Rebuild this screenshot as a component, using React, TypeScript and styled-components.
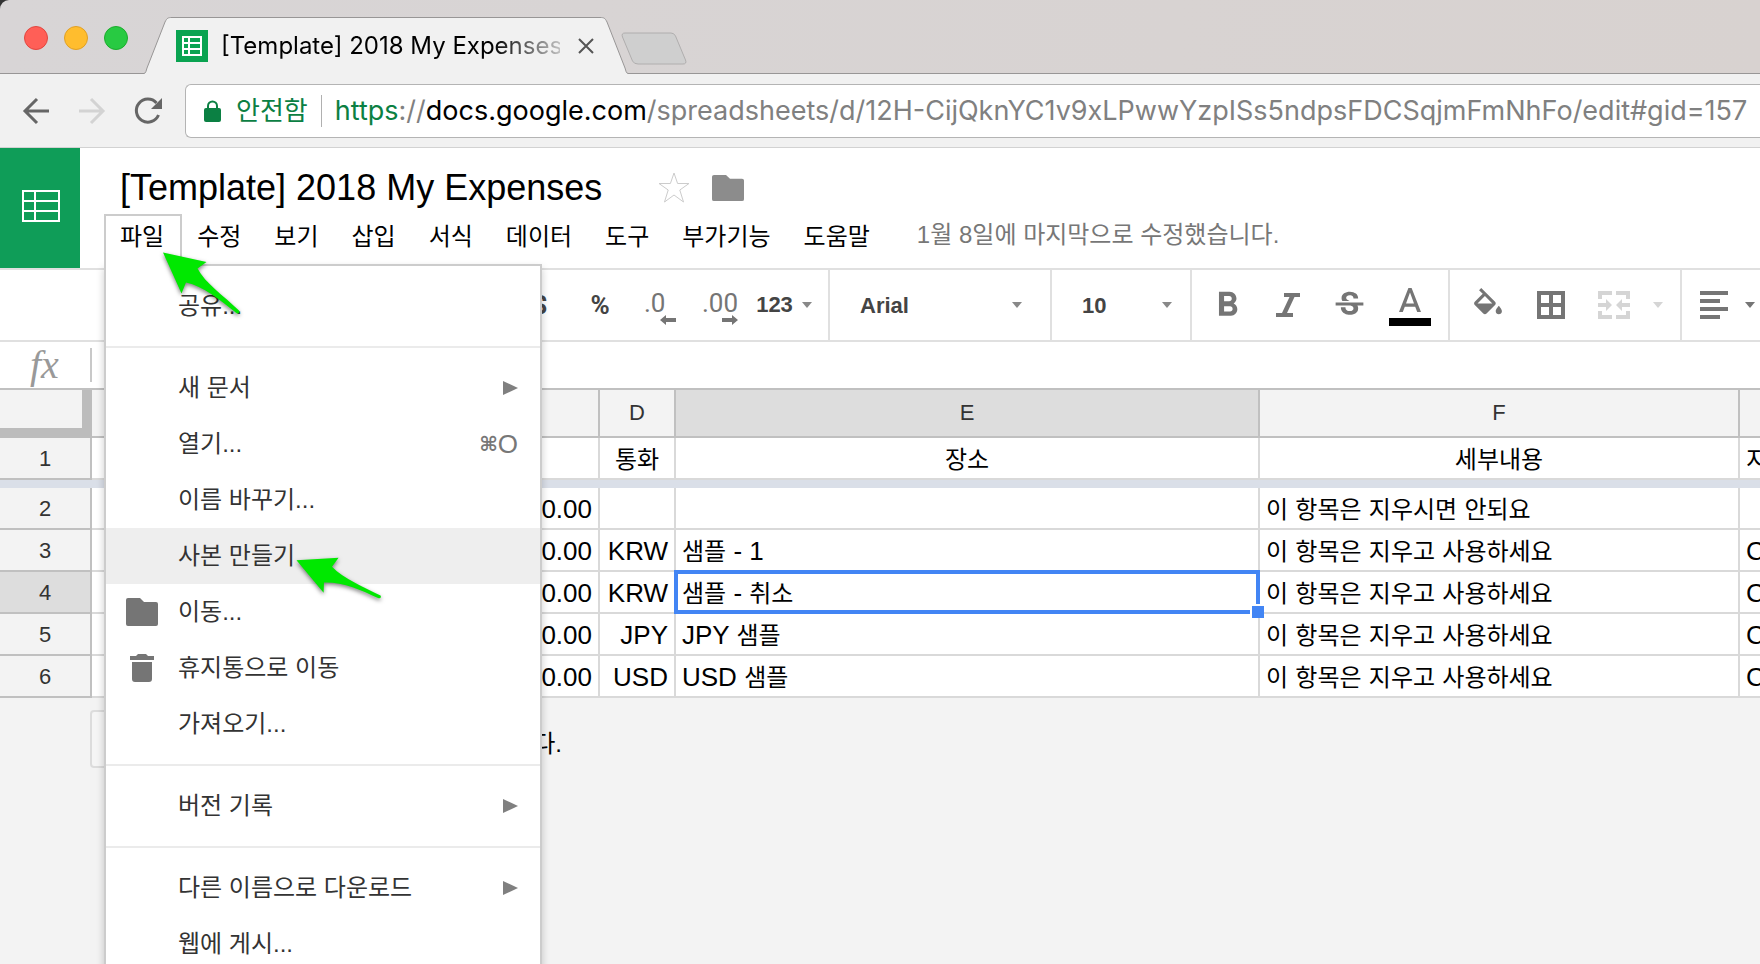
import React from "react";
import styled, { createGlobalStyle, css } from "styled-components";
import { MdFormatBold, MdStrikethroughS } from "react-icons/md";

const GlobalStyle = createGlobalStyle`
  *, *::before, *::after { box-sizing: border-box; }
  body {
    margin: 0;
    background: #f3f3f3;
    color: #000;
    font-family: "Liberation Sans", "Noto Sans CJK KR", sans-serif;
    font-size: 24px;
  }
  button, input, select { font: inherit; color: inherit; }
  svg { display: block; }
`;

const UI_FONT = `Inter, "Noto Sans CJK KR", sans-serif`;

const plainControl = css`
  margin: 0;
  padding: 0;
  border: 0;
  background: transparent;
  outline: 0;
`;

const Window = styled.div`
  position: relative;
  height: 100vh;
  overflow: hidden;
  display: flex;
  flex-direction: column;
  > * { flex: none; }
`;

/* ---------- Browser chrome ---------- */

const Desktop = styled.div`
  background: #333;
`;

const TabStrip = styled.div`
  display: flex;
  align-items: flex-end;
  height: 74px;
  padding-left: 24px;
  border-bottom: 1px solid #989696;
  border-top-left-radius: 9px;
  background: linear-gradient(90deg, #d8d5d6, #d8d2d0);
`;

const Lights = styled.div`
  display: flex;
  gap: 16px;
  width: 120px;
  padding-bottom: 23px;
`;

const Light = styled.button<{ $color: string; $edge: string }>`
  ${plainControl}
  width: 24px;
  height: 24px;
  border-radius: 50%;
  border: 1px solid ${(p) => p.$edge};
  background: ${(p) => p.$color};
`;

const Tab = styled.div`
  position: relative;
  display: flex;
  align-items: center;
  width: 484px;
  height: 57px;
  margin-bottom: -1px;
  padding: 0 34px 0 32px;
`;

const TabShape = styled.svg`
  position: absolute;
  inset: 0;
  width: 100%;
  height: 100%;
`;

const Favicon = styled.svg`
  position: relative;
  flex: none;
`;

const TabTitle = styled.span`
  position: relative;
  flex: 1;
  margin: 0 18px 0 13px;
  overflow: hidden;
  white-space: nowrap;
  font: 24px/32px ${UI_FONT};
  mask-image: linear-gradient(90deg, #000 80%, rgba(0, 0, 0, 0.2));
`;

const BareButton = styled.button`
  ${plainControl}
  position: relative;
  flex: none;
  display: flex;
`;

const NewTab = styled(BareButton)`
  margin: 0 0 8px -7px;
`;

const NavBar = styled.div`
  display: flex;
  align-items: center;
  height: 74px;
  padding-left: 22px;
  border-bottom: 1px solid #d2d2d2;
  background: #f1f1f1;
`;

const NavButtons = styled.div`
  display: flex;
  gap: 28px;
  width: 163px;
`;

const Omnibox = styled.div`
  flex: 1;
  display: flex;
  align-items: center;
  height: 54px;
  min-width: 0;
  padding-left: 18px;
  border: 1px solid #b4b4b4;
  border-right: 0;
  border-radius: 6px 0 0 6px;
  background: #fff;
  font: 27px/40px ${UI_FONT};
`;

const Secure = styled.button`
  ${plainControl}
  display: flex;
  align-items: center;
  gap: 15px;
  padding-right: 13px;
  border-right: 1px solid #b0b0b0;
  color: #0b8043;
  font-size: 26px;
  line-height: 32px;
`;

const Url = styled.div`
  flex: 1;
  padding-left: 13px;
  overflow: hidden;
  white-space: nowrap;
  color: #808080;
  outline: 0;
`;

const UrlPart = styled.span<{ $color: string }>`
  color: ${(p) => p.$color};
`;

/* ---------- Document header ---------- */

const DocHeader = styled.header`
  display: flex;
  border-bottom: 2px solid #e0e0e0;
  background: #fff;
`;

const HomeLink = styled.a`
  display: flex;
  align-items: center;
  justify-content: center;
  width: 80px;
  height: 120px;
  padding: 0 0 4px 2px;
  background: #0f9d58;
`;

const DocMain = styled.div`
  flex: 1;
  padding: 20px 0 0 24px;
`;

const TitleRow = styled.div`
  display: flex;
  align-items: center;
  height: 40px;
  margin-bottom: 6px;
  padding-left: 16px;
`;

const TitleInput = styled.input`
  ${plainControl}
  width: 522px;
  height: 40px;
  margin-right: 16px;
  font-size: 36px;
`;

const StarButton = styled(BareButton)`
  margin-right: 22px;
`;

const MenuRow = styled.nav`
  display: flex;
  align-items: flex-start;
  height: 54px;
`;

const MenuSlot = styled.div`
  position: relative;
  margin-right: -1px;
`;

const MenuButton = styled.button<{ $open?: boolean }>`
  ${plainControl}
  display: block;
  height: 46px;
  padding: 0 16px 2px 14px;
  border: 2px solid transparent;
  border-bottom: 0;
  line-height: 42px;
  white-space: nowrap;
  ${(p) =>
    p.$open &&
    css`
      position: relative;
      z-index: 3;
      height: 52px;
      padding-bottom: 8px;
      border-color: #ccc;
      background: #fff;
    `}
`;

const SaveStatus = styled.span`
  margin-left: 30px;
  line-height: 42px;
  color: #777;
`;

const Menu = styled.div`
  position: absolute;
  z-index: 2;
  top: 50px;
  left: 0;
  width: 438px;
  padding: 12px 0;
  border: 2px solid #ccc;
  background: #fff;
  box-shadow: 0 4px 8px rgba(0, 0, 0, 0.2);
`;

const MenuItem = styled.button<{ $active?: boolean }>`
  ${plainControl}
  display: flex;
  align-items: center;
  width: 100%;
  height: 56px;
  padding: 0 22px 0 20px;
  background: ${(p) => (p.$active ? "#eee" : "transparent")};
  color: #333;
  text-align: left;
`;

const MenuIcon = styled.span`
  width: 52px;
`;

const MenuLabel = styled.span`
  flex: 1;
  line-height: 32px;
`;

const Shortcut = styled.span`
  display: flex;
  align-items: center;
  color: #777;
  font-size: 26px;
  line-height: 32px;
`;

const CommandKey = styled.span`
  font: bold 20px/28px "DejaVu Sans", sans-serif;
`;

const Divider = styled.hr`
  height: 2px;
  margin: 12px 0;
  border: 0;
  background: #ebebeb;
`;

/* ---------- Toolbar ---------- */

const Toolbar = styled.div`
  display: flex;
  height: 72px;
  border-bottom: 2px solid #e0e0e0;
  background: #fff;
`;

const Group = styled.div<{ $width: number; $start?: number; $gap?: number; $end?: number }>`
  flex: none;
  display: flex;
  align-items: center;
  justify-content: ${(p) => (p.$end ? "flex-end" : "flex-start")};
  gap: ${(p) => p.$gap ?? 0}px;
  width: ${(p) => p.$width}px;
  padding: 0 ${(p) => p.$end ?? 0}px 0 ${(p) => p.$start ?? 0}px;
  border-right: 2px solid #e0e0e0;
`;

const ToolButton = styled.button<{ $width?: number; $faded?: boolean }>`
  ${plainControl}
  flex: none;
  display: flex;
  align-items: center;
  justify-content: center;
  gap: 9px;
  width: ${(p) => p.$width ?? 60}px;
  height: 56px;
  color: ${(p) => (p.$faded ? "#d5d5d5" : "#757575")};
`;

const TextTool = styled(ToolButton)`
  color: #444;
  font-size: 22px;
  font-weight: bold;
  line-height: 24px;
  svg { color: #888; }
`;

const SymbolTool = styled(ToolButton)`
  color: #444;
  font: bold 26px/32px Roboto, sans-serif;
`;

const Decimal = styled.span`
  display: flex;
  flex-direction: column;
  gap: 2px;
  padding-top: 8px;
  font: 26px/20px Roboto, sans-serif;
  text-align: left;
  svg { align-self: flex-end; }
`;

const DecimalArrow = styled.svg`
  margin-left: 16px;
`;

const ColorTool = styled.span`
  display: flex;
  flex-direction: column;
  align-items: center;
  gap: 6px;
  padding-top: 4px;
`;

const Swatch = styled.span`
  width: 42px;
  height: 8px;
  background: #000;
`;

const SelectBox = styled.label<{ $width: number; $caret: number }>`
  flex: none;
  position: relative;
  display: flex;
  align-items: center;
  width: ${(p) => p.$width}px;
  border-right: 2px solid #e0e0e0;
  color: #444;
  font-size: 22px;
  font-weight: bold;
  select {
    ${plainControl}
    appearance: none;
    width: 100%;
    height: 56px;
    padding-left: 30px;
  }
  svg {
    position: absolute;
    right: ${(p) => p.$caret}px;
    pointer-events: none;
    color: #888;
  }
`;

/* ---------- Formula bar and grid ---------- */

const FormulaBar = styled.label`
  display: flex;
  align-items: center;
  height: 48px;
  border-bottom: 2px solid #c0c0c0;
  background: #fff;
`;

const Fx = styled.span`
  width: 92px;
  padding-left: 30px;
  border-right: 2px solid #c8c8c8;
  color: #999;
  font: italic 40px/34px "Liberation Serif", serif;
`;

const FormulaInput = styled.input`
  ${plainControl}
  flex: 1;
  height: 40px;
  padding: 0 8px;
`;

const GridArea = styled.main`
  overflow: hidden;
`;

const Sheet = styled.table`
  table-layout: fixed;
  width: 1940px;
  border-collapse: separate;
  border-spacing: 0;
  font-size: 26px;
  line-height: 32px;
`;

const headCell = css`
  border-right: 2px solid #c0c0c0;
  border-bottom: 2px solid #c0c0c0;
  color: #333;
  font-size: 22px;
  font-weight: normal;
  line-height: 32px;
  text-align: center;
`;

const Corner = styled.td`
  padding: 0;
  border: solid #bcbcbc;
  border-width: 0 10px 10px 0;
  background: #f3f3f3;
`;

const ColHead = styled.th<{ $on?: boolean }>`
  ${headCell}
  height: 48px;
  padding: 0;
  background: ${(p) => (p.$on ? "#ddd" : "#f3f3f3")};
`;

const RowHead = styled.th<{ $on?: boolean }>`
  ${headCell}
  height: 42px;
  padding: 2px 0 0;
  background: ${(p) => (p.$on ? "#ddd" : "#f3f3f3")};
`;

const Cell = styled.td<{ $align?: "left" | "right" | "center" }>`
  position: relative;
  height: 42px;
  padding: 2px 6px 0;
  border-right: 2px solid #d9d9d9;
  border-bottom: 2px solid #d9d9d9;
  background: #fff;
  text-align: ${(p) => p.$align ?? "left"};
  white-space: nowrap;
`;

const FreezeBar = styled.td`
  height: 8px;
  padding: 0;
  background: #dadfe8;
`;

const Korean = styled.span`
  font-size: 24px;
`;

const Selection = styled.span`
  position: absolute;
  z-index: 1;
  inset: -2px;
  border: 4px solid #4285f4;
  &::after {
    content: "";
    position: absolute;
    right: -8px;
    bottom: -8px;
    width: 12px;
    height: 12px;
    background: #4285f4;
    box-shadow: -2px -2px 0 #fff;
  }
`;

const AddRows = styled.div`
  display: flex;
  align-items: center;
  width: 472px;
  margin: 12px 0 0 90px;
`;

const AddButton = styled.button`
  height: 58px;
  padding: 0 16px;
  border: 2px solid #dcdcdc;
  border-radius: 4px;
  background: #f5f5f5;
`;

const AddCount = styled.input`
  width: 84px;
  height: 44px;
  margin: 0 8px 0 12px;
  border: 2px solid #d9d9d9;
  text-align: center;
`;

const AddLabel = styled.label`
  flex: 1;
  padding-top: 4px;
  text-align: right;
  white-space: nowrap;
`;

const Pointers = styled.svg`
  position: absolute;
  z-index: 5;
  top: 0;
  left: 0;
  pointer-events: none;
  filter: drop-shadow(0 2px 2px rgba(0, 0, 0, 0.5));
`;

/* ---------- Small drawings ---------- */

const Caret = () => (
  <svg width="10" height="6" viewBox="0 0 10 6" fill="currentColor">
    <path d="M0 0h10L5 6z" />
  </svg>
);

const SubmenuArrow = () => (
  <svg width="15" height="14" viewBox="0 0 15 14" fill="#808080">
    <path d="M0 0l15 7-15 7z" />
  </svg>
);

const Folder = ({ w, h, color }: { w: number; h: number; color: string }) => (
  <svg width={w} height={h} viewBox="0 0 32 28" preserveAspectRatio="none" fill={color}>
    <path d="M2 0h12l4 4h12a2 2 0 0 1 2 2v20a2 2 0 0 1-2 2H2a2 2 0 0 1-2-2V2a2 2 0 0 1 2-2z" />
  </svg>
);

const Trash = () => (
  <svg width="32" height="28" viewBox="0 0 32 28" fill="#757575">
    <path d="M4 2h6l2-2h8l2 2h6v4H4zM6 8h20v17a3 3 0 0 1-3 3H9a3 3 0 0 1-3-3z" />
  </svg>
);

/* ---------- Data ---------- */

type Item = { label: string; icon?: React.ReactNode; sub?: boolean; key?: string; active?: boolean } | null;

const fileMenu: Item[] = [
  { label: "공유..." },
  null,
  { label: "새 문서", sub: true },
  { label: "열기...", key: "O" },
  { label: "이름 바꾸기..." },
  { label: "사본 만들기", active: true },
  { label: "이동...", icon: <Folder w={32} h={28} color="#757575" /> },
  { label: "휴지통으로 이동", icon: <Trash /> },
  { label: "가져오기..." },
  null,
  { label: "버전 기록", sub: true },
  null,
  { label: "다른 이름으로 다운로드", sub: true },
  { label: "웹에 게시..." },
];

const menus = ["수정", "보기", "삽입", "서식", "데이터", "도구", "부가기능", "도움말"];

const columns = ["A", "B", "C", "D", "E", "F", "G"];
const widths = [92, 150, 150, 208, 76, 584, 480, 200];

const rows = [
  { n: 2, amount: "0.00", currency: "", place: "", detail: "이 항목은 지우시면 안되요", pay: "" },
  { n: 3, amount: "0.00", currency: "KRW", place: "샘플 - 1", detail: "이 항목은 지우고 사용하세요", pay: "Card" },
  { n: 4, amount: "0.00", currency: "KRW", place: "샘플 - 취소", detail: "이 항목은 지우고 사용하세요", pay: "Card" },
  { n: 5, amount: "0.00", currency: "JPY", place: "JPY 샘플", detail: "이 항목은 지우고 사용하세요", pay: "Card" },
  { n: 6, amount: "0.00", currency: "USD", place: "USD 샘플", detail: "이 항목은 지우고 사용하세요", pay: "Card" },
];

/* Hangul runs are set slightly smaller than Latin ones. */
const mixed = (text: string) =>
  text.split(/([가-힣]+)/).map((run, i) => (i % 2 ? <Korean key={i}>{run}</Korean> : run));

export default function App() {
  return (
    <Window>
      <GlobalStyle />
      <Desktop>
        <TabStrip>
          <Lights>
            <Light $color="#ff5f57" $edge="#e2463f" aria-label="닫기" />
            <Light $color="#ffbd2e" $edge="#e0a025" aria-label="최소화" />
            <Light $color="#28ca42" $edge="#1bac2c" aria-label="확대" />
          </Lights>
          <Tab>
            <TabShape viewBox="0 0 484 57" preserveAspectRatio="none">
              <path
                d="M0 56.5C2 56 2 54 3 51L21 5C23 1 24 0.5 28 0.5H456C460 0.5 461 1 463 5L481 51C482 54 482 56 484 56.5V57H0z"
                fill="#f1f1f1"
              />
              <path
                d="M0 56.5C2 56 2 54 3 51L21 5C23 1 24 0.5 28 0.5H456C460 0.5 461 1 463 5L481 51C482 54 482 56 484 56.5"
                fill="none"
                stroke="#989696"
              />
            </TabShape>
            <Favicon width="32" height="32" viewBox="0 0 32 32">
              <path fill="#0aa351" d="M0 0h32v32H0z" />
              <path
                fill="#fff"
                fillRule="evenodd"
                d="M6 6h20v20H6zM8 8v4h4V8zM14 8v4h10V8zM8 14v4h4v-4zM14 14v4h10v-4zM8 20v4h4v-4zM14 20v4h10v-4z"
              />
            </Favicon>
            <TabTitle>[Template] 2018 My Expenses</TabTitle>
            <BareButton aria-label="탭 닫기">
              <svg width="16" height="16" viewBox="0 0 16 16" stroke="#555" strokeWidth="2">
                <path d="M1 1l14 14M15 1L1 15" />
              </svg>
            </BareButton>
          </Tab>
          <NewTab aria-label="새 탭">
            <svg width="66" height="33" viewBox="0 0 66 33">
              <path
                d="M4 1H50Q53 1 54.500 4L64.500 28Q66 32 62 32H17Q13 32 11.500 29L1.500 5Q0 1 4 1z"
                fill="#cfcfcf"
                stroke="#b0aeae"
              />
            </svg>
          </NewTab>
        </TabStrip>
      </Desktop>

      <NavBar>
        <NavButtons>
          <BareButton aria-label="뒤로">
            <svg width="28" height="28" viewBox="0 0 28 28" fill="none" stroke="#666" strokeWidth="3">
              <path d="M27 14H3M15 2L3 14l12 12" />
            </svg>
          </BareButton>
          <BareButton aria-label="앞으로">
            <svg width="28" height="28" viewBox="0 0 28 28" fill="none" stroke="#d3d3d3" strokeWidth="3">
              <path d="M1 14h24M13 2l12 12-12 12" />
            </svg>
          </BareButton>
          <BareButton aria-label="새로고침">
            <svg width="28" height="28" viewBox="0 0 28 28">
              <path d="M22.500 6A11.500 11.500 0 1 0 24.500 18" fill="none" stroke="#666" strokeWidth="3" />
              <path d="M28 1v11H17z" fill="#666" />
            </svg>
          </BareButton>
        </NavButtons>
        <Omnibox>
          <Secure>
            <svg width="17" height="22" viewBox="0 0 17 22">
              <path d="M4 10V6a4.500 4.500 0 0 1 9 0v4" fill="none" stroke="#0b8043" strokeWidth="2" />
              <rect y="8" width="17" height="14" rx="2" fill="#0b8043" />
            </svg>
            안전함
          </Secure>
          <Url role="textbox" aria-label="주소" tabIndex={0}>
            <UrlPart $color="#0b8043">https</UrlPart>://<UrlPart $color="#000">docs.google.com</UrlPart>
            /spreadsheets/d/12H-CijQknYC1v9xLPwwYzpISs5ndpsFDCSqjmFmNhFo/edit#gid=157
          </Url>
        </Omnibox>
      </NavBar>

      <DocHeader>
        <HomeLink href="#home" aria-label="스프레드시트 홈">
          <svg width="38" height="32" viewBox="0 0 38 32" fill="none" stroke="#fff" strokeWidth="2">
            <path d="M1 1h36v30H1zM1 11h36M1 21h36M13 1v30" />
          </svg>
        </HomeLink>
        <DocMain>
          <TitleRow>
            <TitleInput aria-label="문서 제목" defaultValue="[Template] 2018 My Expenses" />
            <StarButton aria-label="별표">
              <svg width="32" height="32" viewBox="0 0 32 32" fill="none" stroke="#ccc">
                <path d="M16 1l3.600 10.500H31L21.800 18l3.700 12L16 23l-9.500 7L10.200 18 1 11.500h11.400z" />
              </svg>
            </StarButton>
            <BareButton aria-label="폴더">
              <Folder w={32} h={26} color="#8c8c8c" />
            </BareButton>
          </TitleRow>
          <MenuRow>
            <MenuSlot>
              <MenuButton $open aria-expanded="true">파일</MenuButton>
              <Menu role="menu">
                {fileMenu.map((item, i) =>
                  item ? (
                    <MenuItem key={i} role="menuitem" $active={item.active}>
                      <MenuIcon>{item.icon}</MenuIcon>
                      <MenuLabel>{item.label}</MenuLabel>
                      {item.sub && <SubmenuArrow />}
                      {item.key && (
                        <Shortcut>
                          <CommandKey>⌘</CommandKey>
                          {item.key}
                        </Shortcut>
                      )}
                    </MenuItem>
                  ) : (
                    <Divider key={i} />
                  ),
                )}
              </Menu>
            </MenuSlot>
            {menus.map((m) => (
              <MenuSlot key={m}>
                <MenuButton>{m}</MenuButton>
              </MenuSlot>
            ))}
            <SaveStatus>1월 8일에 마지막으로 수정했습니다.</SaveStatus>
          </MenuRow>
        </DocMain>
      </DocHeader>

      <Toolbar role="toolbar">
        <Group $width={830} $end={10}>
          <SymbolTool>$</SymbolTool>
          <SymbolTool>%</SymbolTool>
          <ToolButton aria-label="소수점 이하 자릿수 감소">
            <Decimal>
              .0
              <DecimalArrow width="16" height="10" viewBox="0 0 16 10" fill="#757575">
                <path d="M6 0v3h10v4H6v3L0 5z" />
              </DecimalArrow>
            </Decimal>
          </ToolButton>
          <ToolButton aria-label="소수점 이하 자릿수 증가">
            <Decimal>
              .00
              <DecimalArrow width="16" height="10" viewBox="0 0 16 10" fill="#757575">
                <path d="M10 0v3H0v4h10v3l6-5z" />
              </DecimalArrow>
            </Decimal>
          </ToolButton>
          <TextTool $width={68}>
            123 <Caret />
          </TextTool>
        </Group>
        <SelectBox $width={222} $caret={28}>
          <select aria-label="글꼴" defaultValue="Arial">
            <option>Arial</option>
          </select>
          <Caret />
        </SelectBox>
        <SelectBox $width={140} $caret={18}>
          <select aria-label="글꼴 크기" defaultValue="10">
            <option>10</option>
          </select>
          <Caret />
        </SelectBox>
        <Group $width={258} $start={5} $gap={1}>
          <ToolButton aria-label="굵게">
            <MdFormatBold size={41} />
          </ToolButton>
          <ToolButton aria-label="기울임꼴">
            <svg width="24" height="24" viewBox="0 0 24 24" fill="currentColor">
              <path d="M8 0h16v4h-5.500l-7.500 16h6v4H0v-4h6l7.500-16H8z" />
            </svg>
          </ToolButton>
          <ToolButton aria-label="취소선">
            <MdStrikethroughS size={37} />
          </ToolButton>
          <ToolButton aria-label="텍스트 색상">
            <ColorTool>
              <svg width="22" height="24" viewBox="0 0 22 24" fill="currentColor">
                <path fillRule="evenodd" d="M9.400 0h3.200L22 24h-3.800l-2-5.200H5.800l-2 5.200H0zM7 15.500h8L11 4.600z" />
              </svg>
              <Swatch />
            </ColorTool>
          </ToolButton>
        </Group>
        <Group $width={232} $start={8} $gap={3}>
          <ToolButton aria-label="채우기 색상">
            <svg width="28" height="34" viewBox="3 0 18 22" fill="currentColor">
              <path d="M16.560 8.940L7.620 0 6.210 1.410l2.380 2.380-5.150 5.150c-.59.59-.59 1.540 0 2.120l5.500 5.500c.29.29.68.44 1.060.44s.77-.15 1.060-.44l5.500-5.500c.59-.58.59-1.530 0-2.120zM5.210 10L10 5.210 14.790 10H5.210zM19 11.500s-2 2.170-2 3.500c0 1.100.9 2 2 2s2-.9 2-2c0-1.330-2-3.500-2-3.500z" />
            </svg>
          </ToolButton>
          <ToolButton aria-label="테두리">
            <svg width="28" height="28" viewBox="0 0 28 28" fill="currentColor">
              <path fillRule="evenodd" d="M0 0h28v28H0zM4 4v8h8V4zM16 4v8h8V4zM4 16v8h8v-8zM16 16v8h8v-8z" />
            </svg>
          </ToolButton>
          <ToolButton $faded aria-label="셀 병합">
            <svg width="32" height="28" viewBox="0 0 32 28" fill="currentColor">
              <path d="M0 0h14v4H4v4H0zM18 0h14v8h-4V4H18zM0 20h4v4h10v4H0zM28 20h4v8H18v-4h10zM0 12h8V8l6 6-6 6v-4H0zM32 12h-8V8l-6 6 6 6v-4h8z" />
            </svg>
          </ToolButton>
          <ToolButton $faded $width={22} aria-label="병합 유형">
            <Caret />
          </ToolButton>
        </Group>
        <Group $width={120} $start={7}>
          <ToolButton $width={50} aria-label="가로 정렬">
            <svg width="28" height="28" viewBox="0 0 28 28" fill="currentColor">
              <path d="M0 0h28v4H0zM0 8h20v4H0zM0 16h28v4H0zM0 24h20v4H0z" />
            </svg>
          </ToolButton>
          <ToolButton $width={22} aria-label="정렬 유형">
            <Caret />
          </ToolButton>
        </Group>
      </Toolbar>

      <FormulaBar>
        <Fx>fx</Fx>
        <FormulaInput aria-label="수식" />
      </FormulaBar>

      <GridArea>
        <Sheet>
          <colgroup>
            {widths.map((w, i) => (
              <col key={i} width={w} />
            ))}
          </colgroup>
          <thead>
            <tr>
              <Corner />
              {columns.map((c) => (
                <ColHead key={c} scope="col" $on={c === "E"}>
                  {c}
                </ColHead>
              ))}
            </tr>
          </thead>
          <tbody>
            <tr>
              <RowHead scope="row">1</RowHead>
              <Cell />
              <Cell />
              <Cell />
              <Cell $align="center">{mixed("통화")}</Cell>
              <Cell $align="center">{mixed("장소")}</Cell>
              <Cell $align="center">{mixed("세부내용")}</Cell>
              <Cell>{mixed("지출")}</Cell>
            </tr>
            <tr>
              <FreezeBar colSpan={8} />
            </tr>
            {rows.map((r) => (
              <tr key={r.n}>
                <RowHead scope="row" $on={r.n === 4}>
                  {r.n}
                </RowHead>
                <Cell />
                <Cell />
                <Cell $align="right">{r.amount}</Cell>
                <Cell $align="right">{r.currency}</Cell>
                <Cell>
                  {mixed(r.place)}
                  {r.n === 4 && <Selection />}
                </Cell>
                <Cell>{mixed(r.detail)}</Cell>
                <Cell>{r.pay}</Cell>
              </tr>
            ))}
          </tbody>
        </Sheet>
        <AddRows>
          <AddButton>추가</AddButton>
          <AddCount id="row-count" defaultValue="1000" />
          <AddLabel htmlFor="row-count">행을 추가합니다.</AddLabel>
        </AddRows>
      </GridArea>

      <Pointers width="400" height="620" viewBox="0 0 400 620" fill="#00e800">
        <path d="M163 252.600L206.500 262L197.500 268.500C205 283 224 296 239 310.500Q240.500 314 237 313.500C220 300 203 286 186 282.500L181.500 293.500z" />
        <path d="M296.500 560.300L338.600 557.700L332 566.700C344 579 364 587 380.500 595.500Q382 599 378 598C361 590 343 582 324 582.500L323.600 592.700z" />
      </Pointers>
    </Window>
  );
}
